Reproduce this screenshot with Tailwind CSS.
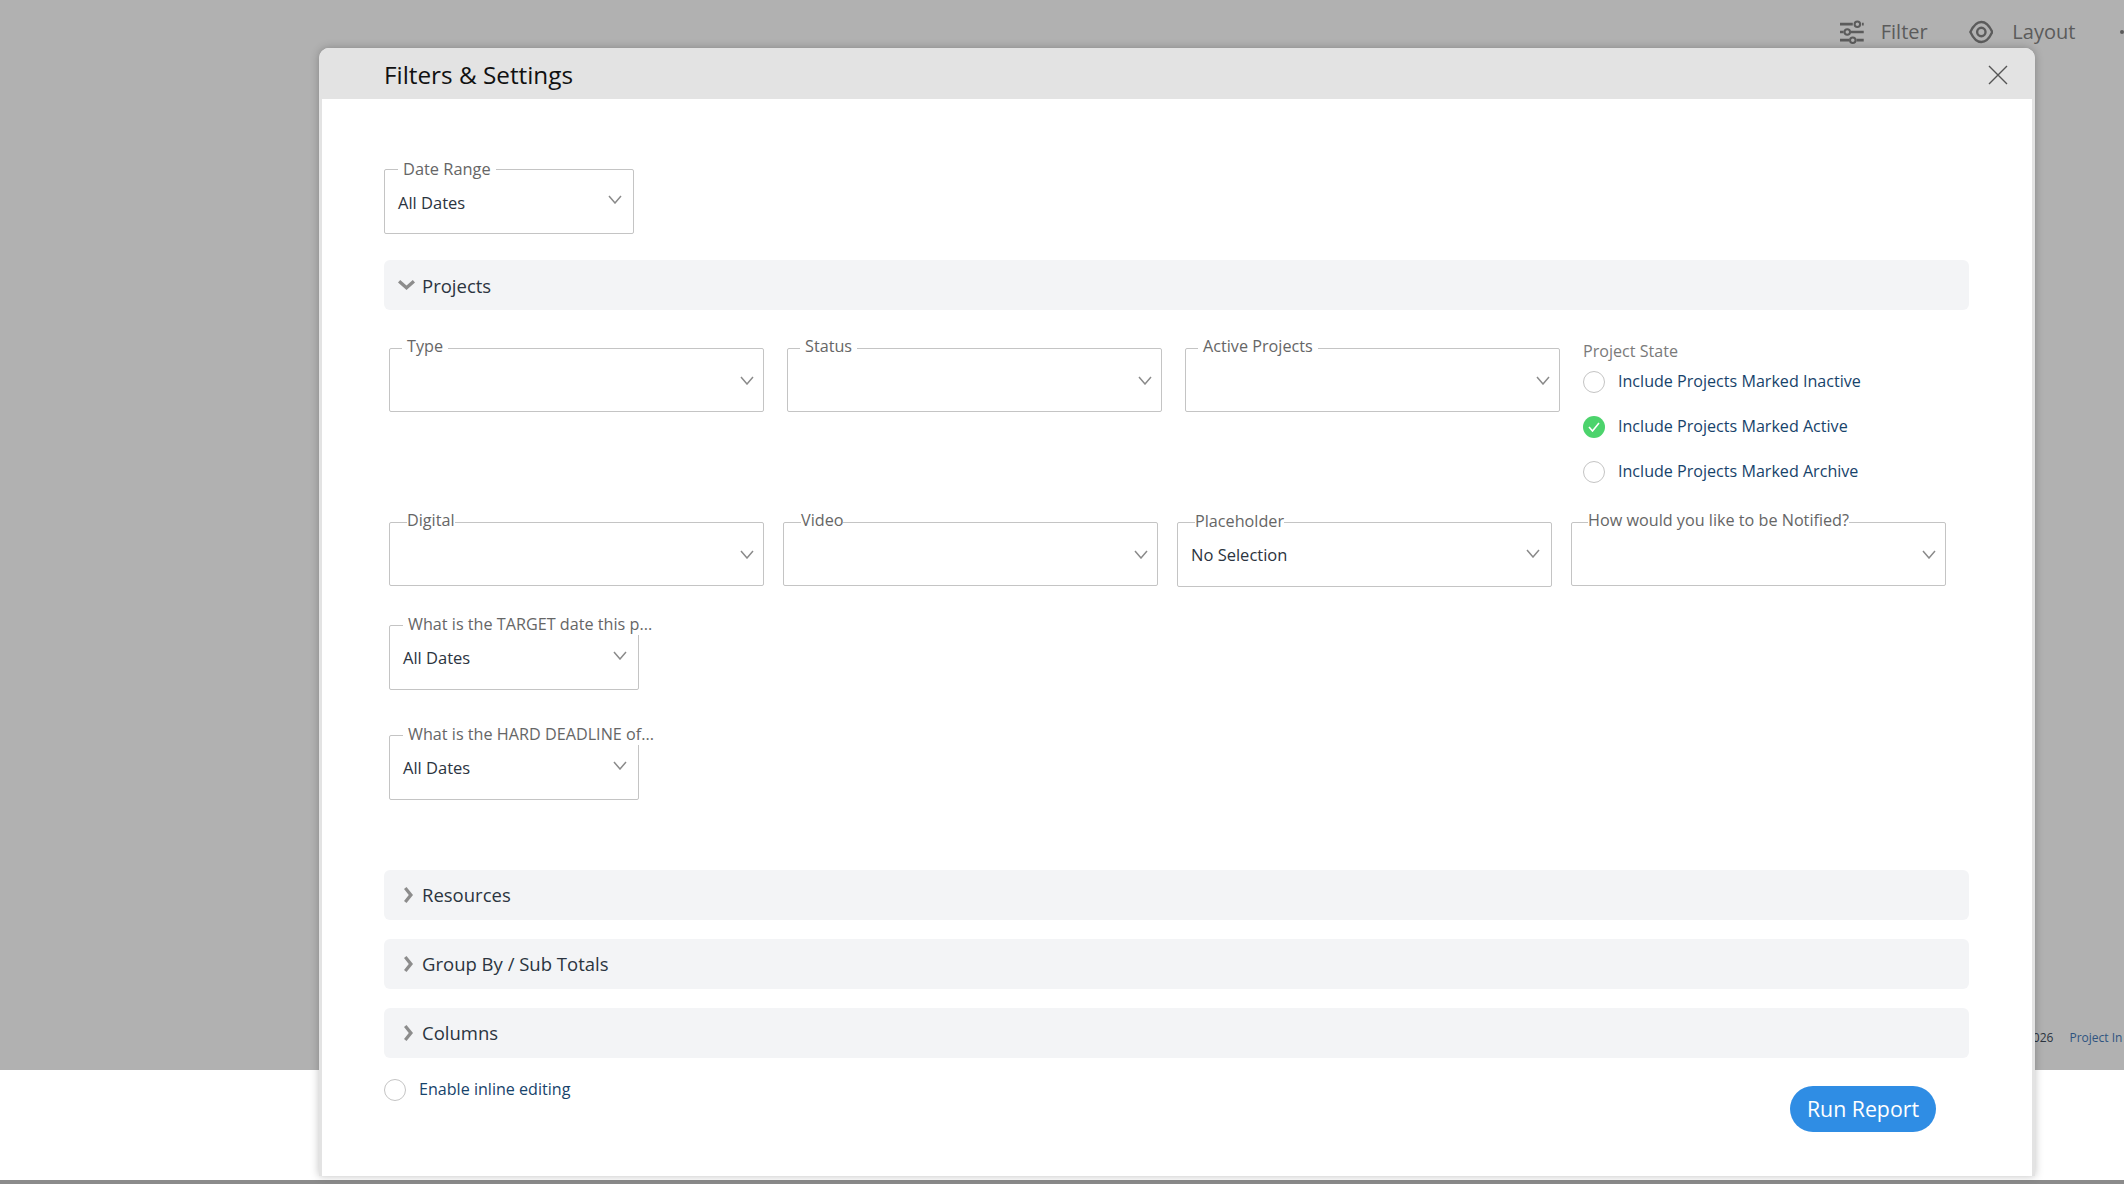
<!DOCTYPE html>
<html>
<head>
<script src="https://cdn.jsdelivr.net/npm/@tailwindcss/browser@4"></script>
</head>
<body class="font-['Open_Sans',sans-serif] overflow-hidden">
<div class="relative w-[2124px] h-[1184px] overflow-hidden bg-white flex flex-col">
  <div class="h-[1070px] bg-[#b1b1b1] relative shrink-0 flex flex-col justify-between">
    <div class="flex items-center h-[64px] pl-[1840px] pb-[1px] text-[#5b5b5b] text-[20px] whitespace-nowrap">
      <svg class="w-[26px] h-[26px]" viewBox="0 0 26 26" fill="none" stroke="#5b5b5b" stroke-width="3"><path d="M0 4.5H14M24 4.5H26M0 13H4M12 13H26M0 22H10M18 22H26"/><circle cx="19" cy="4.5" r="3" stroke-width="2.2"/><circle cx="8" cy="13" r="3" stroke-width="2.2"/><circle cx="14" cy="22" r="3" stroke-width="2.2"/></svg>
      <span class="ml-[17px]">Filter</span>
      <svg class="ml-[41px] w-[27px] h-[26px]" viewBox="0 0 27 26" fill="none" stroke="#5b5b5b" stroke-width="2.6"><path d="M13.500 2C18.500 2 22.500 6.500 25.500 13C22.500 19.500 18.500 24 13.500 24C8.500 24 4.500 19.500 1.500 13C4.500 6.500 8.500 2 13.500 2Z"/><circle cx="13.500" cy="13" r="4.600"/></svg>
      <span class="ml-[19px]">Layout</span>
      <span class="ml-[45px] w-[4px] h-[4px] rounded-full bg-[#5b5b5b]"></span>
    </div>
    <div class="flex gap-[16px] h-[64px] pl-[2026px] pt-[23px] text-[12px] text-[#2f5480] whitespace-nowrap"><span class="text-[#2b3440]">2026</span><span>Project In</span></div>
  </div>
  <div class="flex-1"></div>
  <div class="h-[4px] bg-[#8b8b8b] shrink-0"></div>

  <div class="absolute left-[319px] top-[48px] w-[1716px] h-[1128px] bg-white rounded-t-[10px] border-x-[3px] border-[#e3e3e3] shadow-[0_0_8px_rgba(0,0,0,0.25)]">
    <div class="-mx-[3px] h-[51px] rounded-t-[10px] bg-[#e3e3e3] flex items-center justify-between pl-[65px] pr-[27px]">
      <h2 class="text-[24.3px] text-[#111] font-normal pt-[3px]">Filters &amp; Settings</h2>
      <svg class="w-[20px] h-[20px] mt-[3px]" viewBox="0 0 20 20" fill="none" stroke="#555" stroke-width="1.4"><path d="M1 1L19 19M19 1L1 19"/></svg>
    </div>

    <div class="pl-[62px] pr-[63px]">
      <div class="pt-[70px]">
        <div class="relative w-[250px] h-[65px] border border-[#c4c4c4] rounded-[2px] flex items-center justify-between pl-[13px] pr-[11px]">
          <span class="absolute left-[13px] -top-[12px] bg-white px-[5px] text-[16.4px] leading-[22px] text-[#666]">Date Range</span>
          <span class="text-[16.5px] text-[#2b3440] pt-[3px]">All Dates</span>
          <svg class="w-[14px] h-[9px] -mt-[5px]" viewBox="0 0 14 9" fill="none" stroke="#8a8a8a" stroke-width="1.5"><path d="M1 1L7 8L13 1"/></svg>
        </div>
      </div>

      <div class="mt-[26px] h-[50px] rounded-[6px] bg-[#f3f4f6] flex items-center pl-[14px] text-[18.5px] text-[#2b3440]">
        <svg class="w-[17px] h-[10px]" viewBox="0 0 17 10" fill="#8c8c8c"><path d="M0 2.500L2.200 0L8.500 5.500L14.800 0L17 2.500L8.500 10Z"/></svg>
        <span class="ml-[7px] pt-[1px]">Projects</span>
      </div>

      <div class="mt-[38px] pl-[5px] flex">
        <div class="flex gap-[23px]">
          <div class="relative w-[375px] h-[64px] border border-[#c4c4c4] rounded-[2px] flex items-center justify-end pr-[9px]">
            <span class="absolute left-[12px] -top-[14px] bg-white px-[5px] text-[16.2px] leading-[22px] text-[#666]">Type</span>
            <svg class="w-[14px] h-[9px]" viewBox="0 0 14 9" fill="none" stroke="#8a8a8a" stroke-width="1.5"><path d="M1 1L7 8L13 1"/></svg>
          </div>
          <div class="relative w-[375px] h-[64px] border border-[#c4c4c4] rounded-[2px] flex items-center justify-end pr-[9px]">
            <span class="absolute left-[12px] -top-[14px] bg-white px-[5px] text-[16.2px] leading-[22px] text-[#666]">Status</span>
            <svg class="w-[14px] h-[9px]" viewBox="0 0 14 9" fill="none" stroke="#8a8a8a" stroke-width="1.5"><path d="M1 1L7 8L13 1"/></svg>
          </div>
          <div class="relative w-[375px] h-[64px] border border-[#c4c4c4] rounded-[2px] flex items-center justify-end pr-[9px]">
            <span class="absolute left-[12px] -top-[14px] bg-white px-[5px] text-[16.2px] leading-[22px] text-[#666]">Active Projects</span>
            <svg class="w-[14px] h-[9px]" viewBox="0 0 14 9" fill="none" stroke="#8a8a8a" stroke-width="1.5"><path d="M1 1L7 8L13 1"/></svg>
          </div>
        </div>
        <div class="ml-[23px] -mt-[1px] text-[16.1px]">
          <div class="text-[#7a7a7a] leading-[22px] -mt-[7px]">Project State</div>
          <div class="flex flex-col gap-[23px] mt-[8px] text-[#17436b]">
            <div class="flex items-center h-[22px]"><span class="w-[22px] h-[22px] rounded-full border border-[#c4c4c4] translate-y-[1px]"></span><span class="ml-[13px]">Include Projects Marked Inactive</span></div>
            <div class="flex items-center h-[22px]"><span class="w-[22px] h-[22px] rounded-full bg-[#4cd36c] flex items-center justify-center translate-y-[1px]"><svg class="w-[12px] h-[10px]" viewBox="0 0 12 10" fill="none" stroke="#fff" stroke-width="1.6"><path d="M1 5L4.500 9L11 1"/></svg></span><span class="ml-[13px]">Include Projects Marked Active</span></div>
            <div class="flex items-center h-[22px]"><span class="w-[22px] h-[22px] rounded-full border border-[#c4c4c4] translate-y-[1px]"></span><span class="ml-[13px]">Include Projects Marked Archive</span></div>
          </div>
        </div>
      </div>

      <div class="mt-[40px] pl-[5px] flex gap-[19px] items-start">
        <div class="relative w-[375px] h-[64px] border border-[#c4c4c4] rounded-[2px] flex items-center justify-end pr-[9px]">
          <span class="absolute left-[17px] -top-[14px] bg-white text-[16.2px] leading-[22px] text-[#666]">Digital</span>
          <svg class="w-[14px] h-[9px]" viewBox="0 0 14 9" fill="none" stroke="#8a8a8a" stroke-width="1.5"><path d="M1 1L7 8L13 1"/></svg>
        </div>
        <div class="relative w-[375px] h-[64px] border border-[#c4c4c4] rounded-[2px] flex items-center justify-end pr-[9px]">
          <span class="absolute left-[17px] -top-[14px] bg-white text-[16.2px] leading-[22px] text-[#666]">Video</span>
          <svg class="w-[14px] h-[9px]" viewBox="0 0 14 9" fill="none" stroke="#8a8a8a" stroke-width="1.5"><path d="M1 1L7 8L13 1"/></svg>
        </div>
        <div class="relative w-[375px] h-[65px] border border-[#c4c4c4] rounded-[2px] flex items-center justify-between pl-[13px] pr-[11px]">
          <span class="absolute left-[17px] -top-[13px] bg-white text-[16.2px] leading-[22px] text-[#666]">Placeholder</span>
          <span class="text-[16.5px] text-[#2b3440] pt-[2px]">No Selection</span>
          <svg class="w-[14px] h-[9px] -mt-[2px]" viewBox="0 0 14 9" fill="none" stroke="#8a8a8a" stroke-width="1.5"><path d="M1 1L7 8L13 1"/></svg>
        </div>
        <div class="relative w-[375px] h-[64px] border border-[#c4c4c4] rounded-[2px] flex items-center justify-end pr-[9px]">
          <span class="absolute left-[16px] -top-[14px] bg-white text-[16.2px] leading-[22px] text-[#666]">How would you like to be Notified?</span>
          <svg class="w-[14px] h-[9px]" viewBox="0 0 14 9" fill="none" stroke="#8a8a8a" stroke-width="1.5"><path d="M1 1L7 8L13 1"/></svg>
        </div>
      </div>

      <div class="mt-[38px] ml-[5px] relative w-[250px] h-[65px] border border-[#c4c4c4] rounded-[2px] flex items-center justify-between pl-[13px] pr-[11px]">
        <span class="absolute left-[13px] -top-[13px] bg-white px-[5px] text-[16.2px] leading-[22px] text-[#666] whitespace-nowrap">What is the TARGET date this p...</span>
        <span class="text-[16.5px] text-[#2b3440] pt-[2px]">All Dates</span>
        <svg class="w-[14px] h-[9px] -mt-[5px]" viewBox="0 0 14 9" fill="none" stroke="#8a8a8a" stroke-width="1.5"><path d="M1 1L7 8L13 1"/></svg>
      </div>
      <div class="mt-[45px] ml-[5px] relative w-[250px] h-[65px] border border-[#c4c4c4] rounded-[2px] flex items-center justify-between pl-[13px] pr-[11px]">
        <span class="absolute left-[13px] -top-[13px] bg-white px-[5px] text-[16.2px] leading-[22px] text-[#666] whitespace-nowrap">What is the HARD DEADLINE of...</span>
        <span class="text-[16.5px] text-[#2b3440] pt-[2px]">All Dates</span>
        <svg class="w-[14px] h-[9px] -mt-[5px]" viewBox="0 0 14 9" fill="none" stroke="#8a8a8a" stroke-width="1.5"><path d="M1 1L7 8L13 1"/></svg>
      </div>

      <div class="mt-[70px] flex flex-col gap-[19px]">
        <div class="h-[50px] rounded-[6px] bg-[#f3f4f6] flex items-center pl-[20px] text-[18.5px] text-[#2b3440]">
          <svg class="w-[9px] h-[16px]" viewBox="0 0 9 16" fill="#8c8c8c"><path d="M2.500 0L0 2L4.800 8L0 14L2.500 16L9 8Z"/></svg>
          <span class="ml-[9px]">Resources</span>
        </div>
        <div class="h-[50px] rounded-[6px] bg-[#f3f4f6] flex items-center pl-[20px] text-[18.5px] text-[#2b3440]">
          <svg class="w-[9px] h-[16px]" viewBox="0 0 9 16" fill="#8c8c8c"><path d="M2.500 0L0 2L4.800 8L0 14L2.500 16L9 8Z"/></svg>
          <span class="ml-[9px]">Group By / Sub Totals</span>
        </div>
        <div class="h-[50px] rounded-[6px] bg-[#f3f4f6] flex items-center pl-[20px] text-[18.5px] text-[#2b3440]">
          <svg class="w-[9px] h-[16px]" viewBox="0 0 9 16" fill="#8c8c8c"><path d="M2.500 0L0 2L4.800 8L0 14L2.500 16L9 8Z"/></svg>
          <span class="ml-[9px]">Columns</span>
        </div>
      </div>

      <div class="flex justify-between items-start pr-[33px]">
        <div class="mt-[20px] flex items-center h-[22px] text-[16.1px] text-[#17436b]"><span class="w-[22px] h-[22px] rounded-full border border-[#c4c4c4] translate-y-[1px]"></span><span class="ml-[13px]">Enable inline editing</span></div>
        <button class="mt-[28px] w-[146px] h-[46px] rounded-full bg-[#2f8de4] text-white text-[21.300px]">Run Report</button>
      </div>
    </div>
  </div>
</div>
</body>
</html>
